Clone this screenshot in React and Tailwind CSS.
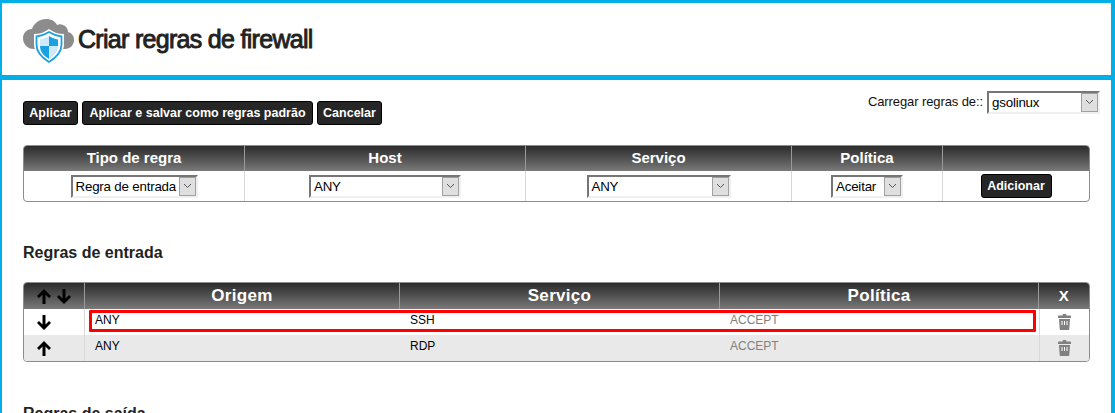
import React from "react";

function Select({ value, className }) {
  return (
    <div className={`flex h-[23px] items-stretch border-t-2 border-l-2 border-t-[#767676] border-l-[#767676] border-b-2 border-r-2 border-b-[#f0f0f0] border-r-[#f0f0f0] bg-white text-[13.33px] leading-[19px] tracking-[-0.2px] text-black ${className}`}>
      <span className="flex-1 overflow-hidden whitespace-nowrap pl-[3px]">{value}</span>
      <span className="flex w-[17px] items-center justify-center border border-[#a0a0a0] bg-[#dfdfdf]">
        <svg width="9" height="6" viewBox="0 0 9 6" fill="none"><path d="M1 1l3.5 3.5L8 1" stroke="#555" strokeWidth="1" /></svg>
      </span>
    </div>
  );
}

function Btn({ children, className = "" }) {
  return (
    <button className={`h-6 rounded-[3px] border border-black bg-[#262626] text-[12.5px] font-bold text-white ${className}`}>
      {children}
    </button>
  );
}

function Logo() {
  return (
    <svg width="52" height="46" viewBox="0 0 52 46" className="shrink-0">
      <path d="M11 31C4 31 0 26 0 20c0-5 4-9 9-9 2-6 8-10 14-10 5 0 9 2 11 6 2-1 4-1 6 0 3 1 5 4 5 7 4 1 6 4 6 8 0 5-4 9-9 9z" fill="#8c8c8c" />
      <path d="M26 11c4 3 9 5 15 5v10c0 9-7 15-15 20-8-5-15-11-15-20V16c6 0 11-2 15-5z" fill="#fff" />
      <path d="M26 14c4 2.500 8 4 12.500 4.500v8c0 8-5 13-12.500 17.500-7.500-4.500-12.500-9.500-12.500-17.500v-8C18 18 22 16.500 26 14z" fill="none" stroke="#1ba1e2" strokeWidth="1.800" />
      <path d="M26 18c3 2 6 3 9 3.500V28H26zM26 28v13c-5-3-9-7-9-13z" fill="#1ba1e2" />
      <path d="M26 18v10h-9v-6.500c3-.5 6-1.500 9-3.500zM26 28h9c0 6-4 10-9 13z" fill="#cfe9f8" />
    </svg>
  );
}

function Trash() {
  return (
    <svg width="13" height="16" viewBox="0 0 13 16">
      <path d="M5 0h3l.5 1.500H12c.6 0 1 .5 1 1V4H0V2.500c0-.5.4-1 1-1h3.500z" fill="#808080" />
      <path d="M1 5h11l-.7 10c0 .6-.5 1-1 1H2.700c-.5 0-1-.4-1-1z" fill="#808080" />
      <path d="M4 7v4M6.500 7v4M9 7v4" stroke="#fff" strokeWidth="1" />
    </svg>
  );
}

function Arrow({ down }) {
  return (
    <svg width="14" height="15" viewBox="0 0 14 15" className="shrink-0">
      <path
        d={down ? "M7 15L0 8l2-2 3.500 3.500V0h3v9.500L12 6l2 2z" : "M7 0l7 7-2 2-3.500-3.500V15h-3V5.500L2 9 0 7z"}
        fill="#000"
      />
    </svg>
  );
}

const head = "flex items-center justify-center font-bold text-white border-r border-[#9a9a9a] last:border-r-0";
const gradient = "bg-gradient-to-b from-[#2c2c2c] to-[#7a7a7a]";

function Row({ dir, origin, service, policy, bg, highlight }) {
  return (
    <div className={`relative grid h-[26px] grid-cols-[61px_315px_320px_319px_1fr] text-[12px] text-black ${bg}`}>
      <div className="flex items-center border-r border-[#d8d8d8] pl-[13px]"><Arrow down={dir} /></div>
      <div className="pl-[10px] pt-[2px]">{origin}</div>
      <div className="pl-[10px] pt-[2px]">{service}</div>
      <div className="pl-[10px] pt-[2px] text-[#808080]">{policy}</div>
      <div className="flex items-center justify-center border-l border-[#d8d8d8]"><Trash /></div>
      {highlight && <div className="absolute left-[65px] top-[1px] h-[22px] w-[947px] rounded-[1px] border-[3px] border-[#ff0000]" />}
    </div>
  );
}

export default function App() {
  return (
    <div className="h-[413px] w-[1115px] overflow-hidden bg-white font-['Liberation_Sans',Arial,sans-serif]">
      <div className="h-[413px] border-t-[3px] border-r-4 border-l-[2px] border-[#00aee8]">
        <header className="box-content flex h-[69px] items-center gap-[3px] border-b-[5px] border-[#00aee8] pl-[21px] pt-[3px]">
          <Logo />
          <h1 className="-mt-[2px] text-[25px] font-normal leading-none tracking-[-0.7px] text-[#222] [-webkit-text-stroke:0.9px_#222]">Criar regras de firewall</h1>
        </header>

        <main className="pl-[21px] pr-[21px]">
          <div className="flex justify-between pt-5">
            <div className="flex gap-1 pt-px">
              <Btn className="w-[55px]">Aplicar</Btn>
              <Btn className="w-[231px]">Aplicar e salvar como regras padrão</Btn>
              <Btn className="w-[65px]">Cancelar</Btn>
            </div>
            <div className="-mt-[10px] mr-[-10px] flex h-[24px] items-center gap-1 text-[13px] tracking-[-0.1px] text-[#111]">
              <span>Carregar regras de::</span>
              <Select value="gsolinux" className="w-[113px]" />
            </div>
          </div>

          <section className="mt-5 w-[1067px] overflow-hidden rounded-[4px] border border-[#8c8c8c]">
            <div className={`grid h-[25px] grid-cols-[221px_281px_266px_151px_1fr] text-[15px] ${gradient}`}>
              <div className={head}>Tipo de regra</div>
              <div className={head}>Host</div>
              <div className={head}>Serviço</div>
              <div className={head}>Política</div>
              <div className={head}></div>
            </div>
            <div className="grid h-[30px] grid-cols-[221px_281px_266px_151px_1fr] items-center">
              <div className="flex h-full items-center justify-center border-r border-[#d8d8d8]"><Select value="Regra de entrada" className="w-[127px]" /></div>
              <div className="flex h-full items-center justify-center border-r border-[#d8d8d8]"><Select value="ANY" className="w-[152px]" /></div>
              <div className="flex h-full items-center justify-center border-r border-[#d8d8d8]"><Select value="ANY" className="w-[144px]" /></div>
              <div className="flex h-full items-center justify-center border-r border-[#d8d8d8]"><Select value="Aceitar" className="w-[72px]" /></div>
              <div className="flex h-full items-center justify-center"><Btn className="w-[71px]">Adicionar</Btn></div>
            </div>
          </section>

          <h2 className="mt-[41px] text-[16px] font-bold leading-5 text-[#222]">Regras de entrada</h2>

          <section className="mt-[19px] w-[1067px] overflow-hidden rounded-[4px] border border-[#8c8c8c]">
            <div className={`grid h-[26px] grid-cols-[61px_315px_320px_319px_1fr] text-[17px] tracking-[0.3px] ${gradient}`}>
              <div className={`${head} justify-start gap-[6px] pl-[13px]`}>
                <Arrow /><Arrow down />
              </div>
              <div className={head}>Origem</div>
              <div className={head}>Serviço</div>
              <div className={head}>Política</div>
              <div className={`${head} text-[15px]`}>X</div>
            </div>
            <Row dir origin="ANY" service="SSH" policy="ACCEPT" bg="bg-white" highlight />
            <Row origin="ANY" service="RDP" policy="ACCEPT" bg="bg-[#e9e9e9]" />
          </section>

          <h2 className="mt-[42px] text-[16px] font-bold leading-5 text-[#222]">Regras de saída</h2>
        </main>
      </div>
    </div>
  );
}
